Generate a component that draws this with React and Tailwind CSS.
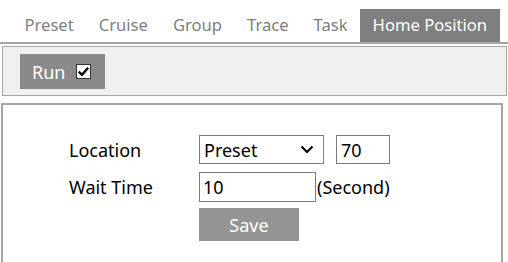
import React from "react";

const tabs = ["Preset", "Cruise", "Group", "Trace", "Task", "Home Position"];

export default function App() {
  return (
    <div className="w-[508px] h-[262px] bg-white overflow-hidden" style={{ fontFamily: '"Noto Sans", "Open Sans", sans-serif' }}>
      <div className="flex h-[44px] items-end pl-[12px] border-b-2 border-[#a6a6a6]">
        {tabs.map((t) => (
          <div
            key={t}
            className={
              "h-[33px] px-[12.5px] flex items-center text-[16.6px] leading-none " +
              (t === "Home Position" ? "bg-[#7f7f7f] text-white" : "text-[#808080]")
            }
          >
            {t}
          </div>
        ))}
      </div>
      <div className="mt-[2px] ml-[2px] mr-[1px] h-[50px] border border-[#a6a6a6] bg-[#f0f0f0] pl-[17px] pt-[7px]">
        <div className="w-[85px] h-[35px] bg-[#8a8a8a] text-white flex items-center pl-[12px] gap-[11px] text-[18px] leading-none">
          <span>Run</span>
          <span className="w-[15px] h-[15px] bg-white border border-[#333] flex items-center justify-center">
            <svg width="13" height="13" viewBox="0 0 13 13">
              <path d="M1.8 6.6 L5 9.8 L11.2 2.8" fill="none" stroke="#000" strokeWidth="2.4" />
            </svg>
          </span>
        </div>
      </div>
      <div className="mt-[7px] ml-[1px] w-[502px] h-[200px] border-l-2 border-t-2 border-r-2 border-[#a6a6a6] pt-[30px] pl-[66px] text-[18px] text-black">
        <div className="flex items-center h-[29px]">
          <div className="w-[130px] leading-none">Location</div>
          <div className="w-[125px] h-[29px] border border-[#7a7a7a] flex items-center justify-between pl-[4px] pr-[9px] leading-none">
            <span>Preset</span>
            <svg width="14" height="9" viewBox="0 0 14 9">
              <path d="M1.5 1.5 L7 7 L12.5 1.5" fill="none" stroke="#000" strokeWidth="2" />
            </svg>
          </div>
          <div className="ml-[12px] w-[54px] h-[29px] border border-[#7a7a7a] flex items-center pl-[4px] leading-none">70</div>
        </div>
        <div className="flex items-center h-[30px] mt-[8px]">
          <div className="w-[130px] leading-none">Wait Time</div>
          <div className="w-[117px] h-[30px] border border-[#7a7a7a] flex items-center pl-[3px] leading-none">10</div>
          <div className="ml-[1px] leading-none">(Second)</div>
        </div>
        <div className="flex mt-[6px]">
          <div className="ml-[130px] w-[100px] h-[33px] bg-[#959595] text-white flex items-center justify-center leading-none">Save</div>
        </div>
      </div>
    </div>
  );
}
